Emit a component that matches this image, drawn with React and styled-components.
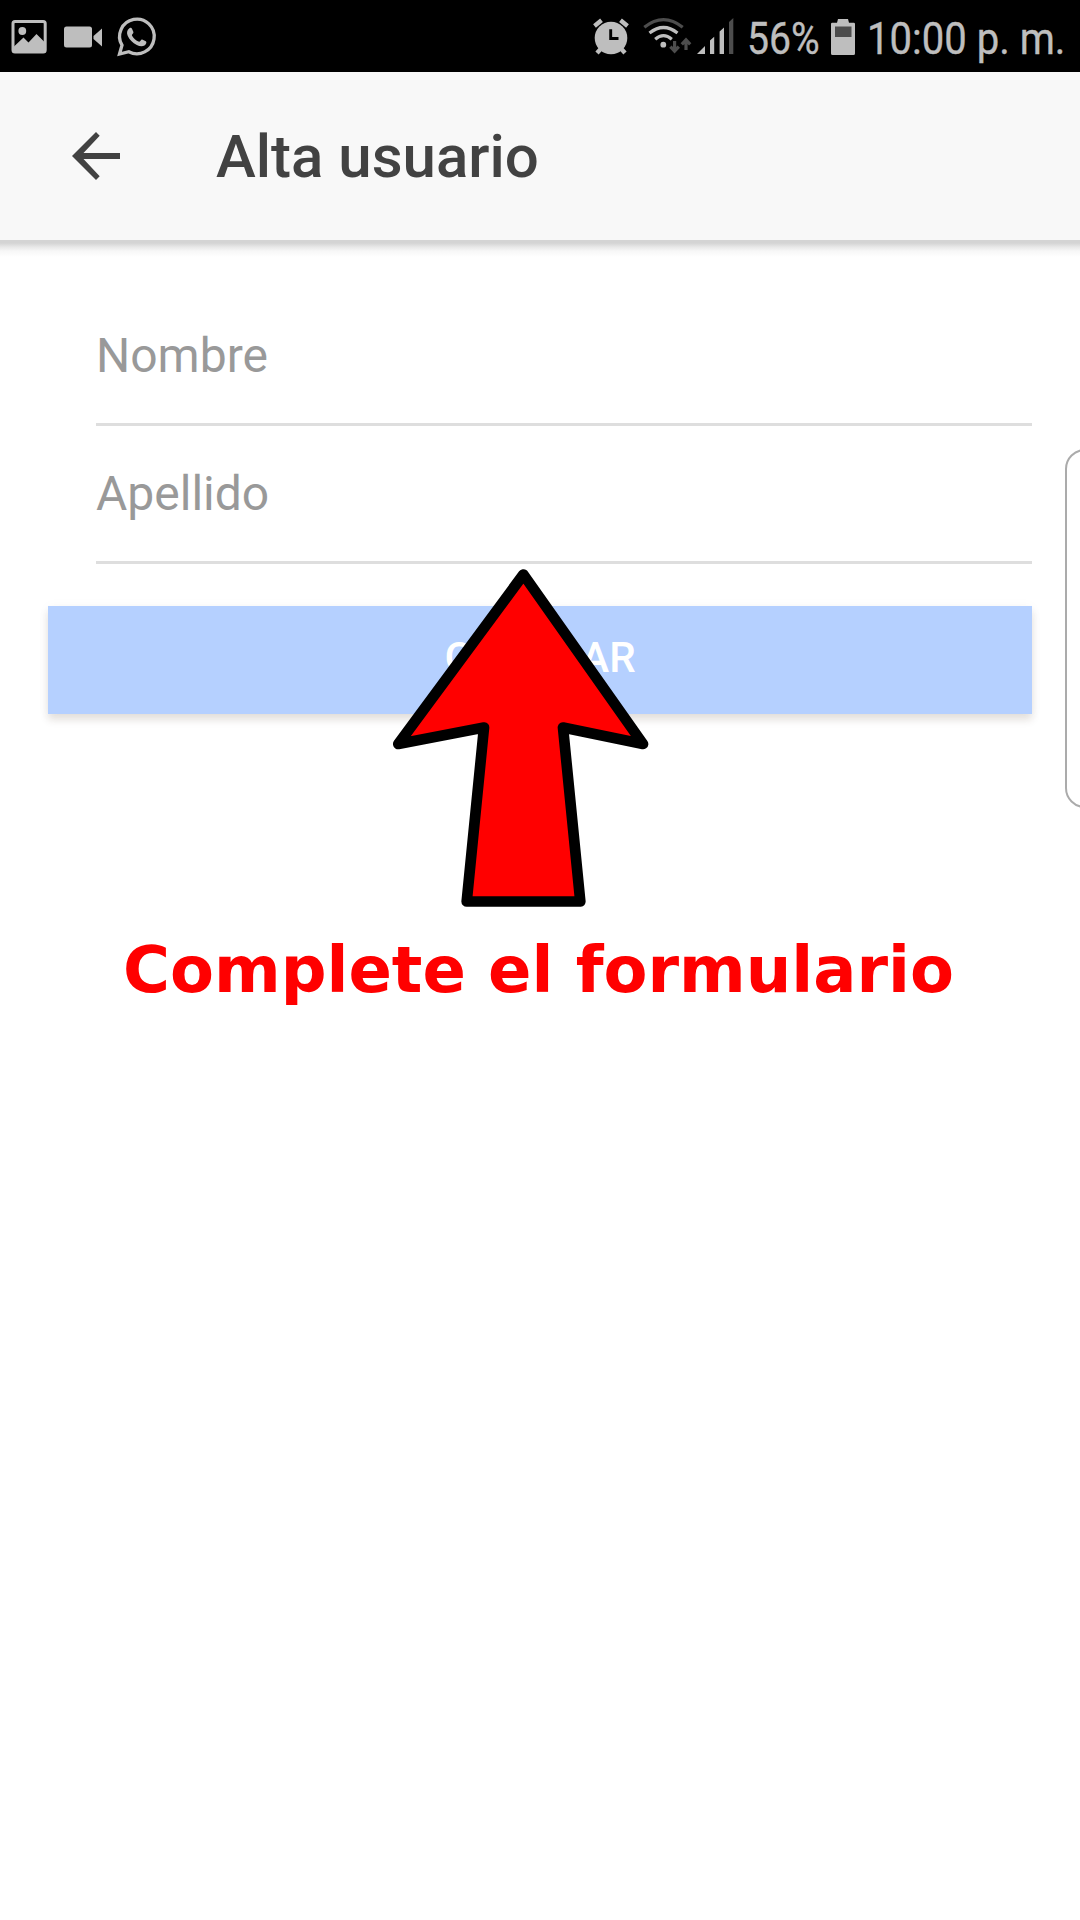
import React from "react";
import styled, { createGlobalStyle } from "styled-components";

const GlobalStyle = createGlobalStyle`
  * { box-sizing: border-box; }
  body { margin: 0; background: #fff; overflow: hidden; }
`;

const Screen = styled.div`
  position: relative;
  width: 1080px;
  height: 1920px;
  overflow: hidden;
  background: #fff;
  font-family: Roboto, "Noto Sans", sans-serif;
`;

const StatusBar = styled.div`
  display: flex;
  justify-content: space-between;
  height: 72px;
  padding: 0 16px 0 11px;
  background: #000;
  color: #bebebe;
`;

const IconGroup = styled.div`
  display: flex;
  gap: ${(p) => p.$gap}px;
`;

const Glyph = styled.svg`
  display: block;
  flex: none;
  height: 72px;
  width: ${(p) => p.$width}px;
  overflow: visible;
`;

const StatusText = styled.div`
  flex: none;
  width: ${(p) => p.$width}px;
  font-size: 45px;
  line-height: 78px;
  white-space: nowrap;
  transform: scaleX(${(p) => p.$squeeze});
  transform-origin: left center;
  -webkit-text-stroke: 0.4px #bebebe;
`;

const Toolbar = styled.header`
  position: relative;
  display: flex;
  align-items: center;
  gap: 96px;
  height: 168px;
  padding: 0 72px;
  background: #f8f8f8;

  &::after {
    content: "";
    position: absolute;
    left: 0;
    right: 0;
    top: 100%;
    height: 17px;
    background: linear-gradient(#d4d4d4 0, #d4d4d4 3px, #e8e8e8 7px, #f7f7f7 11px, #fff 17px);
  }
`;

const BackButton = styled.button`
  display: flex;
  border: 0;
  padding: 0;
  background: none;
`;

const Title = styled.h1`
  margin: 2px 0 0;
  color: #424242;
  font-size: 60px;
  font-weight: 500;
  line-height: 72px;
`;

const Form = styled.form`
  display: flex;
  flex-direction: column;
  padding: 48px;
`;

const Field = styled.label`
  display: block;
  height: 138px;
  margin-left: 48px;
  padding-top: 40px;
  border-bottom: 3px solid #dedede;
  color: #999;
  font-size: 48px;
  line-height: 56px;
`;

const SubmitButton = styled.button`
  height: 108px;
  margin-top: 42px;
  border: 0;
  padding: 0 0 4px;
  background: #b5d0ff;
  color: #fff;
  font: 500 42px/42px Roboto, "Noto Sans", sans-serif;
  box-shadow: 0 6px 8px rgba(60, 30, 10, 0.12), 0 1px 12px rgba(0, 0, 0, 0.04);
`;

const Pointer = styled.svg`
  position: absolute;
  left: 390px;
  top: 566px;
`;

const Caption = styled.p`
  position: absolute;
  left: 123px;
  top: 932px;
  margin: 0;
  color: #f00;
  font: bold 64px/76px "DejaVu Sans", sans-serif;
  white-space: nowrap;
`;

const EdgeHandle = styled.div`
  position: absolute;
  left: 1065px;
  top: 449px;
  width: 40px;
  height: 359px;
  border: 2px solid #ababab;
  border-radius: 20px;
  background: #fff;
`;

const light = "#bebebe";
const dim = "#4d4d4d";

const PictureIcon = () => (
  <Glyph $width={36} viewBox="11 0 36 72">
    <rect x="13" y="21.5" width="32.2" height="30.5" rx="2" fill="none" stroke={light} strokeWidth="3" />
    <circle cx="22.3" cy="31" r="3.9" fill={light} />
    <path d="M14 46.5 L23.5 37.5 L28.5 42.5 L36.5 34 L45 42.5 V52 H14Z" fill={light} />
  </Glyph>
);

const VideoIcon = () => (
  <Glyph $width={38} viewBox="64 0 38 72">
    <rect x="64" y="26.5" width="28" height="21" rx="2.5" fill={light} />
    <path d="M102 28.5 V46.5 L93.5 39 V36Z" fill={light} />
  </Glyph>
);

const ChatIcon = () => (
  <Glyph $width={37} viewBox="119 0 37 72">
    <path
      d="M119.5 54 L122 45.2 A17.3 17.3 0 1 1 128.8 51.7 Z"
      fill="none"
      stroke={light}
      strokeWidth="3.3"
      strokeLinejoin="miter"
    />
    <path
      d="M129.4 28.2 C130.6 27.4 131.6 27.8 132.1 29 L133.4 32.1 C133.8 33.3 131.8 34.6 131.9 35.4 C133.5 38.4 135.8 40.5 139.1 41.8 C140.2 41.7 141 39.2 142.2 39.5 L145.8 41.2 C147.2 42 145.8 44.8 144.4 45.4 C142.4 46.7 139.4 46.2 136.8 44.9 C132.6 43 129.5 39.6 127.8 36 C126.4 33 126.9 29.9 129.4 28.2Z"
      fill={light}
    />
  </Glyph>
);

const AlarmIcon = () => (
  <Glyph $width={38} viewBox="592 0 38 72">
    <g stroke={light} strokeWidth="4.4">
      <path d="M594.5 26 L601.5 20.3 M620.5 20.3 L627.5 26" />
      <path d="M602 47.5 L597 53 M620 47.5 L625 53" />
    </g>
    <circle cx="611" cy="38" r="16.3" fill={light} />
    <path d="M610.7 29.3 V38.5 H618.5" fill="none" stroke="#000" strokeWidth="2.9" />
  </Glyph>
);

const WifiIcon = () => (
  <Glyph $width={49} viewBox="643 0 49 72">
    <g fill="none" strokeWidth="3.2">
      <path d="M644.3 27.2 Q663.5 12 682.7 27.2" stroke={dim} />
      <path d="M649.5 33 Q663.5 22 677.5 33" stroke={light} />
      <path d="M655.2 39.2 Q663.5 32.2 671.8 39.2" stroke={light} />
      <path d="M674.6 41 V51 M670.4 46.6 L674.6 51.2 L678.8 46.6" stroke={dim} />
      <path d="M686 50 V40 M681.8 44.4 L686 39.8 L690.2 44.4" stroke={dim} />
    </g>
    <circle cx="663.3" cy="44.7" r="2.9" fill={light} />
  </Glyph>
);

const SignalIcon = () => (
  <Glyph $width={37} viewBox="697 0 37 72">
    <path d="M697 54 L705 46 V54Z M710 54 V40.5 L714.2 36.8 V54Z M719.6 54 V31.5 L724 27.5 V54Z" fill={light} />
    <path d="M729 54 V22 L733.3 18 V54Z" fill={dim} />
  </Glyph>
);

const BatteryIcon = () => (
  <Glyph $width={24} viewBox="831 0 24 72">
    <path d="M831 24 Q831 22.8 832.2 22.8 H837 L838 19 H848 L849 22.8 H853.8 Q855 22.8 855 24 V53.5 Q855 55 853.5 55 H832.5 Q831 55 831 53.5Z" fill={light} />
    <rect x="835" y="26.5" width="16.5" height="10.5" fill={dim} />
  </Glyph>
);

const Spacer = styled.div`
  width: ${(p) => p.$width}px;
`;

export default function App() {
  return (
    <Screen>
      <GlobalStyle />
      <StatusBar>
        <IconGroup $gap={17}>
          <PictureIcon />
          <VideoIcon />
          <ChatIcon />
        </IconGroup>
        <IconGroup $gap={0}>
          <AlarmIcon />
          <Spacer $width={13} />
          <WifiIcon />
          <Spacer $width={5} />
          <SignalIcon />
          <Spacer $width={13} />
          <StatusText $width={84} $squeeze={0.87}>56%</StatusText>
          <BatteryIcon />
          <Spacer $width={12} />
          <StatusText $width={197} $squeeze={0.89}>10:00 p. m.</StatusText>
        </IconGroup>
      </StatusBar>
      <Toolbar>
        <BackButton aria-label="Atrás">
          <svg width="48" height="48" viewBox="0 0 48 48">
            <path d="M48 21 H11.5 L27.7 3.8 L24 0 L0 24 L24 48 L27.7 44.2 L11.5 27 H48Z" fill="#424242" />
          </svg>
        </BackButton>
        <Title>Alta usuario</Title>
      </Toolbar>
      <Form>
        <Field>Nombre</Field>
        <Field>Apellido</Field>
        <SubmitButton type="button">GUARDAR</SubmitButton>
      </Form>
      <Pointer width="262" height="346" viewBox="390 566 262 346">
        <path
          d="M523.4 574.5 L643 744 L563 727.5 L580.3 901.5 H466.7 L484 727.5 L398.3 744 Z"
          fill="#f00"
          stroke="#000"
          strokeWidth="10.7"
          strokeLinejoin="round"
        />
      </Pointer>
      <Caption>Complete el formulario</Caption>
      <EdgeHandle />
    </Screen>
  );
}
